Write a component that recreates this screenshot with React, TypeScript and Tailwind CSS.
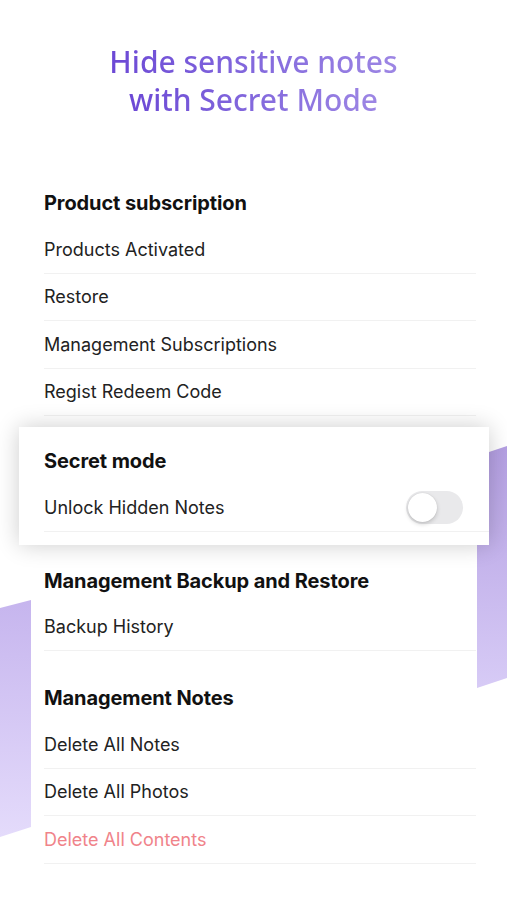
import React from 'react';

const font = { fontFamily: 'Inter, "Noto Sans", sans-serif' };

function Header({ children }: { children: React.ReactNode }) {
  return (
    <div className="flex h-[46px] items-center pl-[13px] text-[20px] font-bold tracking-[-0.1px] text-[#111]">
      {children}
    </div>
  );
}

function Row({ children, danger = false }: { children: React.ReactNode; danger?: boolean }) {
  return (
    <div className="ml-[13px] flex h-[47.5px] items-center border-b border-[#f1f1f1] text-[18px]">
      <span className={danger ? 'text-[#f0838a]' : 'text-[#222]'}>{children}</span>
    </div>
  );
}

function Toggle() {
  return (
    <div className="mr-[26px] flex h-[33px] w-[57px] items-center rounded-full bg-[#e9e9eb] p-[2px]">
      <div className="h-[29px] w-[29px] rounded-full bg-white shadow-[0_2px_4px_rgba(0,0,0,0.18),0_0_1px_rgba(0,0,0,0.15)]" />
    </div>
  );
}

export default function App() {
  return (
    <div className="relative h-[900px] w-full overflow-hidden bg-white" style={font}>
      {/* side decorations */}
      <svg className="absolute left-0 top-0" width="507" height="900" viewBox="0 0 507 900">
        <defs>
          <linearGradient id="lg" x1="0" y1="0" x2="0" y2="1">
            <stop offset="0" stopColor="#c6b5ee" />
            <stop offset="1" stopColor="#e4dbfb" />
          </linearGradient>
          <linearGradient id="rg" x1="0" y1="0" x2="0" y2="1">
            <stop offset="0" stopColor="#b49fe2" />
            <stop offset="1" stopColor="#d7cbf6" />
          </linearGradient>
        </defs>
        <polygon points="0,608 31,600 31,827 0,837" fill="url(#lg)" />
        <polygon points="477,456 507,446 507,678 477,688" fill="url(#rg)" />
      </svg>

      <div className="relative">
        <h1
          className="flex flex-col items-center pt-[43px] text-[30px] font-medium leading-[38px]"
          style={{ fontFamily: '"Noto Sans", sans-serif' }}
        >
          <span className="bg-gradient-to-r from-[#6c48d5] to-[#9d86e4] bg-clip-text text-transparent">
            Hide sensitive notes
          </span>
          <span className="bg-gradient-to-r from-[#6c48d5] to-[#9d86e4] bg-clip-text text-transparent">
            with Secret Mode
          </span>
        </h1>

        <div className="mx-[31px] mt-[61px] bg-white">
          <Header>Product subscription</Header>
          <Row>Products Activated</Row>
          <Row>Restore</Row>
          <Row>Management Subscriptions</Row>
          <Row>Regist Redeem Code</Row>

          <div className="-ml-[12px] -mr-[13px] mt-[11px] bg-white pb-[13px] pt-[11px] shadow-[0_0_22px_rgba(0,0,0,0.2)]">
            <div className="flex h-[46px] items-center pl-[25px] text-[20px] font-bold tracking-[-0.1px] text-[#111]">
              Secret mode
            </div>
            <div className="ml-[25px] flex h-[47.5px] items-center justify-between border-b border-[#f1f1f1] text-[18px] text-[#222]">
              <span>Unlock Hidden Notes</span>
              <Toggle />
            </div>
          </div>

          <div className="mt-[13px]">
            <Header>Management Backup and Restore</Header>
            <Row>Backup History</Row>
          </div>

          <div className="mt-[24px]">
            <Header>Management Notes</Header>
            <Row>Delete All Notes</Row>
            <Row>Delete All Photos</Row>
            <Row danger>Delete All Contents</Row>
          </div>
        </div>
      </div>
    </div>
  );
}
